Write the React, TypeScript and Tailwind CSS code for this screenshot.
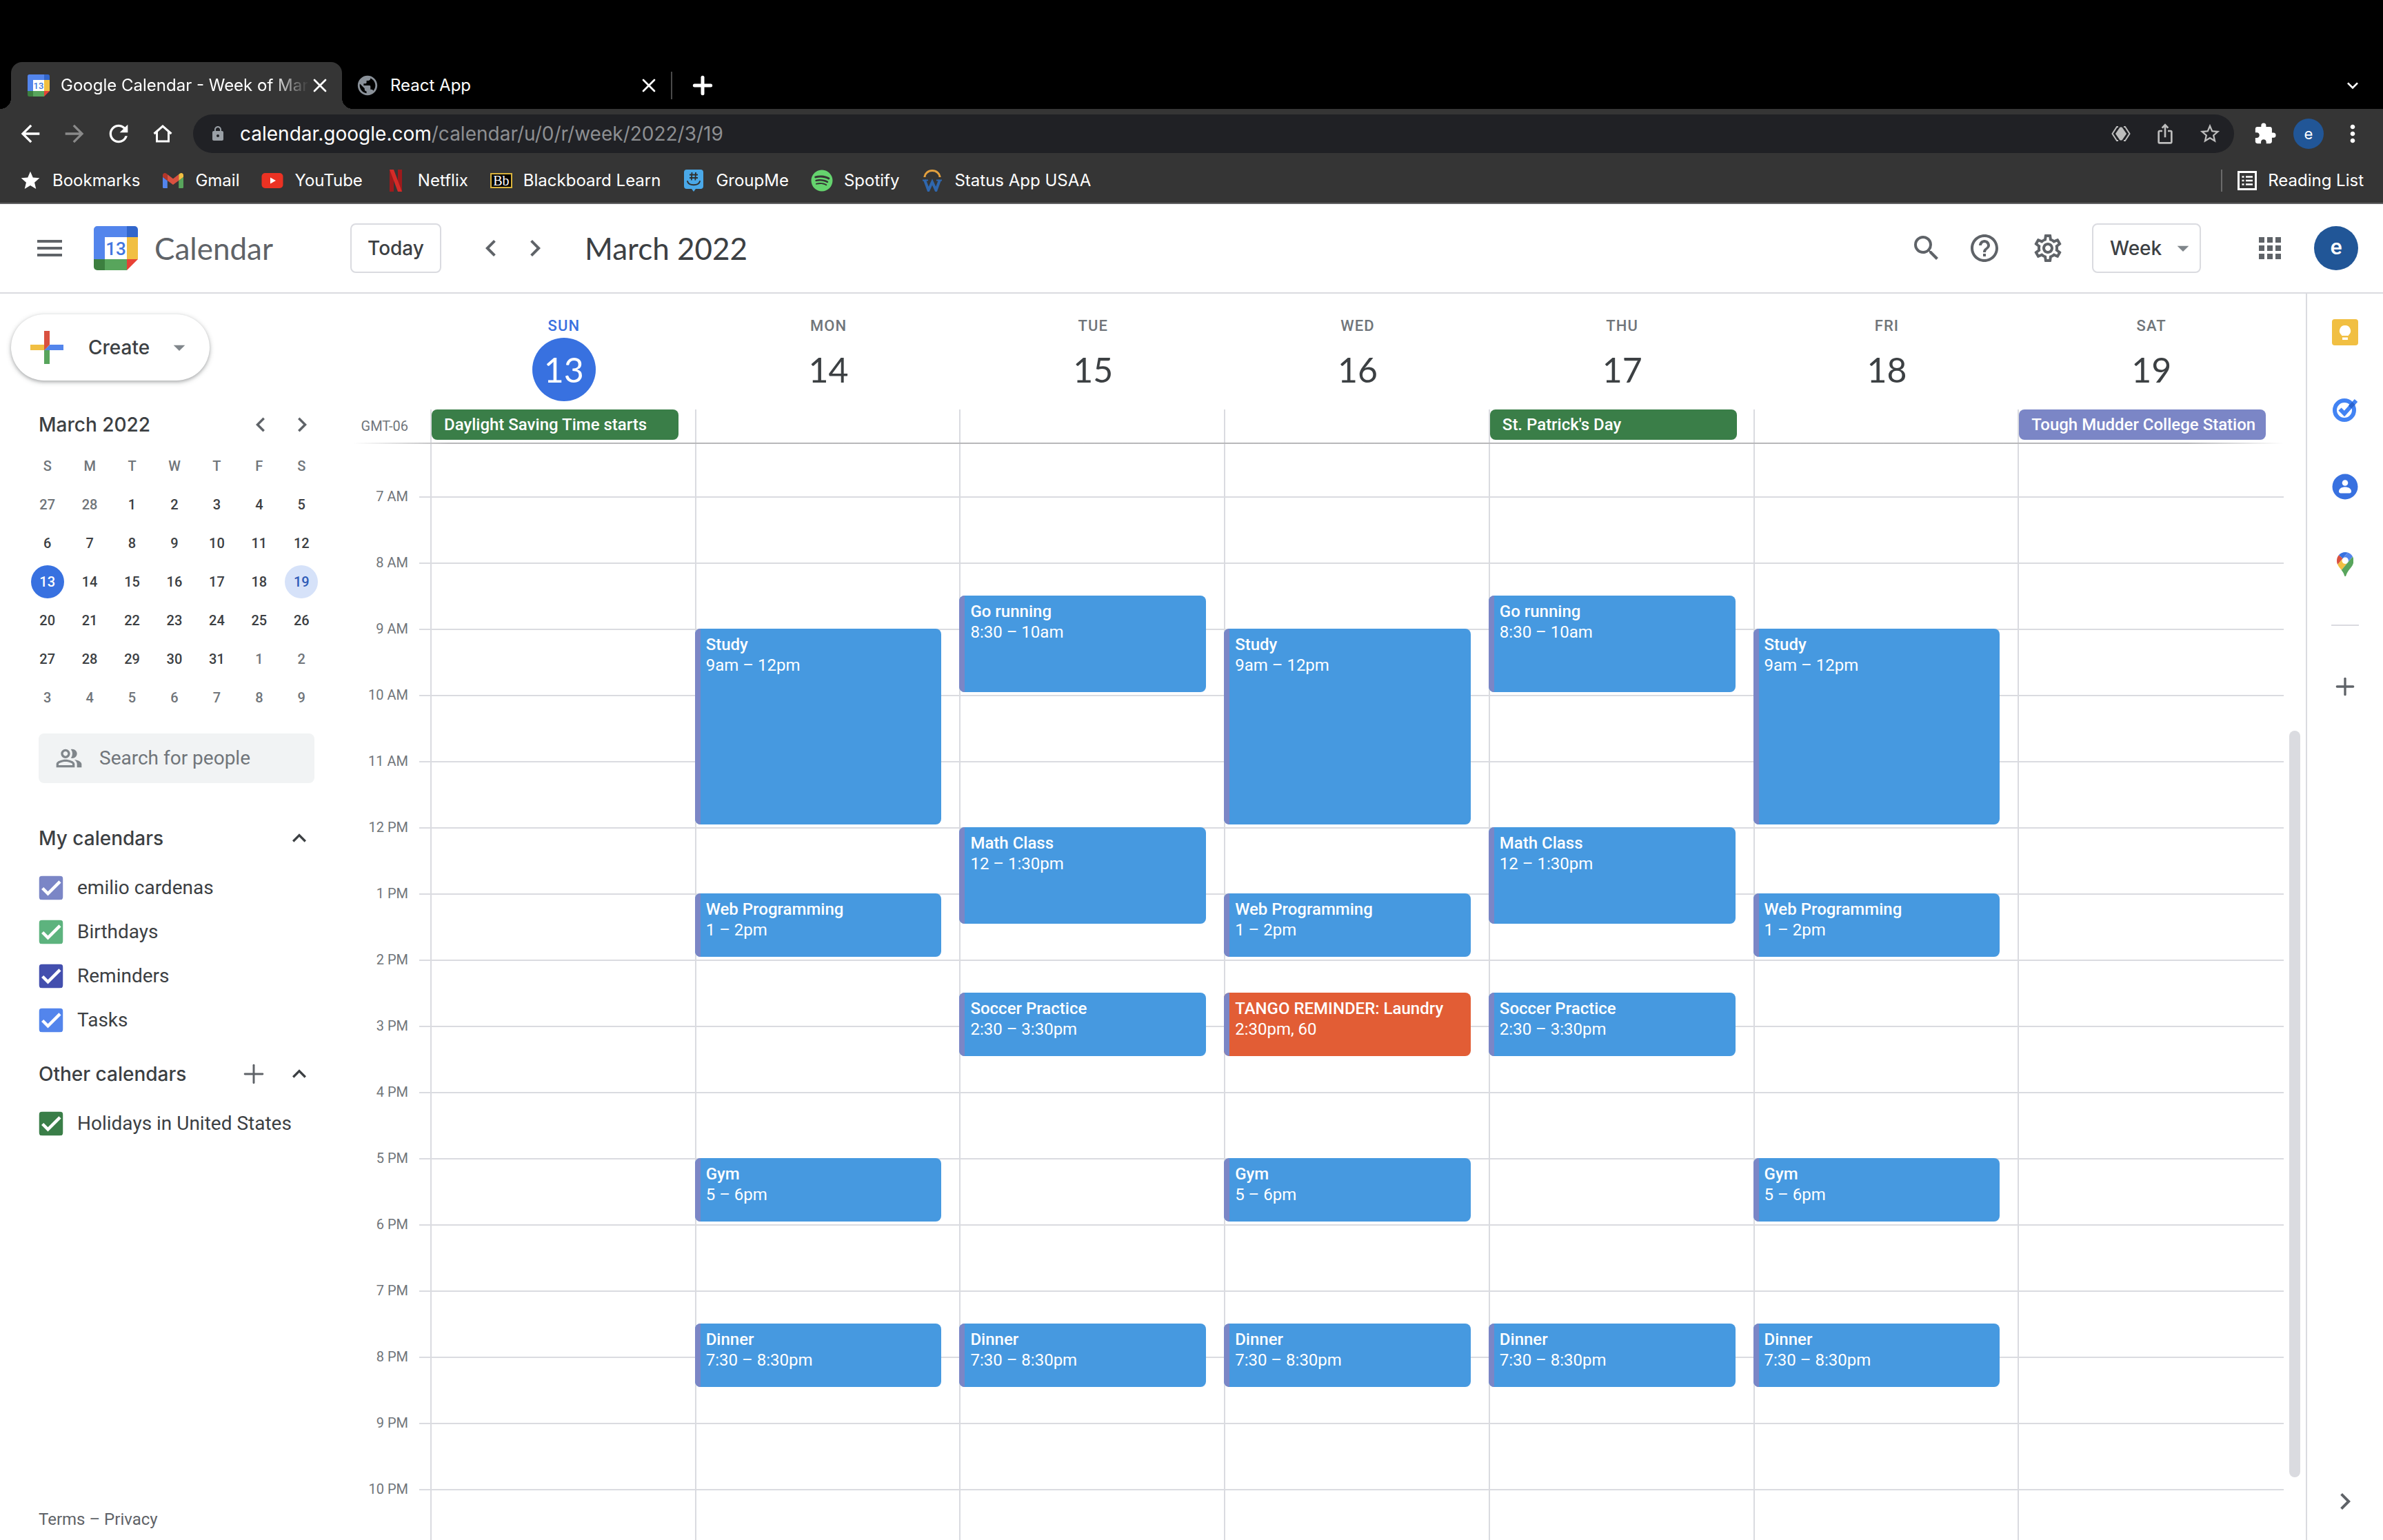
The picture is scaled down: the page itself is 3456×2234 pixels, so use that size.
import type { ReactNode } from 'react';
import { Plus, X } from 'lucide-react';
import { FaSpotify } from 'react-icons/fa';
import {
  MdApps,
  MdArrowBack,
  MdArrowDropDown,
  MdArrowForward,
  MdCheck,
  MdChevronLeft,
  MdChevronRight,
  MdExpandLess,
  MdExpandMore,
  MdExtension,
  MdHelpOutline,
  MdIosShare,
  MdLock,
  MdMenu,
  MdMoreVert,
  MdOutlinePeopleAlt,
  MdOutlineSettings,
  MdPublic,
  MdRefresh,
  MdSearch,
  MdStar,
  MdStarBorder,
} from 'react-icons/md';

type CalendarEvent = {
  title: string;
  time: string;
  start: number;
  end: number;
  reminder?: boolean;
};

type Day = {
  name: string;
  date: number;
  today?: boolean;
  allDay?: { title: string; holiday: boolean };
  events: CalendarEvent[];
};

const HOUR = 96;
const FIRST_LINE = 76;

const study = { title: 'Study', time: '9am – 12pm', start: 9, end: 12 };
const web = { title: 'Web Programming', time: '1 – 2pm', start: 13, end: 14 };
const gym = { title: 'Gym', time: '5 – 6pm', start: 17, end: 18 };
const dinner = { title: 'Dinner', time: '7:30 – 8:30pm', start: 19.5, end: 20.5 };
const running = { title: 'Go running', time: '8:30 – 10am', start: 8.5, end: 10 };
const math = { title: 'Math Class', time: '12 – 1:30pm', start: 12, end: 13.5 };
const soccer = { title: 'Soccer Practice', time: '2:30 – 3:30pm', start: 14.5, end: 15.5 };
const laundry = {
  title: 'TANGO REMINDER: Laundry',
  time: '2:30pm, 60',
  start: 14.5,
  end: 15.5,
  reminder: true,
};

const days: Day[] = [
  { name: 'Sun', date: 13, today: true, allDay: { title: 'Daylight Saving Time starts', holiday: true }, events: [] },
  { name: 'Mon', date: 14, events: [study, web, gym, dinner] },
  { name: 'Tue', date: 15, events: [running, math, soccer, dinner] },
  { name: 'Wed', date: 16, events: [study, web, laundry, gym, dinner] },
  { name: 'Thu', date: 17, allDay: { title: "St. Patrick's Day", holiday: true }, events: [running, math, soccer, dinner] },
  { name: 'Fri', date: 18, events: [study, web, gym, dinner] },
  { name: 'Sat', date: 19, allDay: { title: 'Tough Mudder College Station', holiday: false }, events: [] },
];

const hours = [
  '7 AM', '8 AM', '9 AM', '10 AM', '11 AM', '12 PM', '1 PM', '2 PM',
  '3 PM', '4 PM', '5 PM', '6 PM', '7 PM', '8 PM', '9 PM', '10 PM',
];

const weeks = [
  [27, 28, 1, 2, 3, 4, 5],
  [6, 7, 8, 9, 10, 11, 12],
  [13, 14, 15, 16, 17, 18, 19],
  [20, 21, 22, 23, 24, 25, 26],
  [27, 28, 29, 30, 31, 1, 2],
  [3, 4, 5, 6, 7, 8, 9],
];

const myCalendars = [
  { name: 'emilio cardenas', color: 'bg-[#7b86c6]' },
  { name: 'Birthdays', color: 'bg-[#5db37e]' },
  { name: 'Reminders', color: 'bg-[#434fae]' },
  { name: 'Tasks', color: 'bg-[#5385ec]' },
];

const otherCalendars = [{ name: 'Holidays in United States', color: 'bg-[#3a7e48]' }];

function CalendarLogo({ className }: { className: string }) {
  return (
    <svg viewBox="0 0 64 64" className={className} aria-hidden="true">
      <path fill="#fff" d="M15 15h34v34H15z" />
      <path fill="#5385ec" d="M5 0h43v16H16v32H0V5a5 5 0 0 1 5-5z" />
      <path fill="#3266cb" d="M48 0h11a5 5 0 0 1 5 5v11H48z" />
      <path fill="#f1bf42" d="M48 16h16v32H48z" />
      <path fill="#58a55c" d="M16 48h32v16H16z" />
      <path fill="#3c7f3f" d="M0 48h16v16H5a5 5 0 0 1-5-5z" />
      <path fill="#e84135" d="M48 48h16L48 64z" />
      <text x="32" y="42" textAnchor="middle" fill="#4377e0" className="font-['Roboto',sans-serif] text-[26px] font-medium">
        13
      </text>
    </svg>
  );
}

function GmailIcon() {
  return (
    <svg viewBox="52 42 88 66" className="w-8 px-px" aria-hidden="true">
      <path fill="#5385ec" d="M58 108h14V74L52 59v43c0 3.32 2.69 6 6 6" />
      <path fill="#58a55c" d="M120 108h14c3.32 0 6-2.69 6-6V59l-20 15" />
      <path fill="#f1bf42" d="M120 48v26l20-15v-8c0-7.42-8.47-11.65-14.4-7.2" />
      <path fill="#d95140" d="M72 74V48l24 18 24-18v26L96 92" />
      <path fill="#b3362a" d="M52 51v8l20 15V48l-5.6-4.2c-5.94-4.45-14.4-.22-14.4 7.2" />
    </svg>
  );
}

function YouTubeIcon() {
  return (
    <svg viewBox="0 0 32 32" className="size-8" aria-hidden="true">
      <rect x="0.5" y="5" width="31" height="22" rx="5" fill="#eb3223" />
      <path fill="#fff" d="M13 11.5v9l8-4.5z" />
    </svg>
  );
}

function NetflixIcon() {
  return (
    <svg viewBox="0 0 32 32" className="size-8" aria-hidden="true">
      <path fill="#9c1a1c" d="M7 0h6v32H7zM19 0h6v32h-6z" />
      <path fill="#d62b28" d="M7 0h6l12 32h-6z" />
    </svg>
  );
}

function BlackboardIcon() {
  return (
    <span className="flex size-8 items-center justify-center" aria-hidden="true">
      <span className="flex h-[22px] w-8 items-center justify-center border-2 border-[#d9b23c] bg-black font-['Liberation_Serif',serif] text-[20px] leading-none text-white">
        Bb
      </span>
    </span>
  );
}

function GroupMeIcon() {
  return (
    <svg viewBox="0 0 32 32" className="size-8" aria-hidden="true">
      <path fill="#4aa8e8" d="M6 0h20a4 4 0 0 1 4 4v20a4 4 0 0 1-4 4h-7l-3 4-3-4H6a4 4 0 0 1-4-4V4a4 4 0 0 1 4-4z" />
      <path fill="none" stroke="#303030" strokeWidth="1.8" d="M13.5 4 12.800 15.500M19 4l-.7 11.500M10 7.500h12M10 12h12" />
      <path fill="none" stroke="#303030" strokeWidth="2" strokeLinecap="round" d="M7 17c2 7 16 7 18 0" />
    </svg>
  );
}

function StatusIcon() {
  return (
    <svg viewBox="0 0 32 32" className="size-8" aria-hidden="true">
      <path fill="none" stroke="#e3a03e" strokeWidth="3" d="M5 11a11 9.500 0 0 1 22 0" />
      <path fill="none" stroke="#2f67ae" strokeWidth="4" d="M5 15l5.500 15L16 18l5.500 12L27 15" />
      <path fill="none" stroke="#2f67ae" strokeWidth="2" d="M2 15.500h8M22 15.500h8" />
    </svg>
  );
}

function HomeIcon() {
  return (
    <svg viewBox="0 0 28 28" className="size-7" fill="none" stroke="currentColor" strokeWidth="3" aria-hidden="true">
      <path d="M1.500 14 14 3l12.500 11M5.500 11.500V25h17V11.500" />
    </svg>
  );
}

function DiamondIcon() {
  return (
    <svg viewBox="0 0 32 32" className="size-8" aria-hidden="true">
      <path fill="currentColor" d="M14.500 6.500h3L24 16l-6.500 9.500h-3L8 16z" />
      <path fill="none" stroke="currentColor" strokeWidth="2" d="M12 6 10 6 3.500 16 10 26h2M20 6h2l6.500 10L22 26h-2" />
    </svg>
  );
}

function ReadingListIcon() {
  return (
    <svg viewBox="0 0 28 28" className="size-7" fill="none" stroke="currentColor" aria-hidden="true">
      <rect x="1.500" y="1.500" width="25" height="25" strokeWidth="3" />
      <path strokeWidth="2.500" d="M6.500 8.500h3M6.500 14h3M6.500 19.500h3M12 8.500h10M12 14h10M12 19.500h10" />
    </svg>
  );
}

function KeepIcon() {
  return (
    <svg viewBox="0 0 38 38" className="size-[38px]" aria-hidden="true">
      <rect width="38" height="38" rx="4" fill="#f1bf42" />
      <path fill="#fff" d="M19 9a8 8 0 0 0-5 14.300V24h10v-.7A8 8 0 0 0 19 9zM15 26.500h8V30h-8z" />
    </svg>
  );
}

function TasksIcon() {
  return (
    <svg viewBox="0 0 36 36" className="size-9" fill="none" aria-hidden="true">
      <circle cx="17" cy="19" r="14" stroke="#4283f3" strokeWidth="6" />
      <path stroke="#4283f3" strokeWidth="6" d="M10.500 17.500 17 24 34 5" />
      <path stroke="#2a63cf" strokeWidth="6" d="M25 14.500 30.500 9" />
    </svg>
  );
}

function ContactsIcon() {
  return (
    <svg viewBox="0 0 38 38" className="size-[38px]" aria-hidden="true">
      <circle cx="19" cy="19" r="18.500" fill="#3871e0" />
      <circle cx="19" cy="13.500" r="4.300" fill="#fff" />
      <path fill="#fff" d="M10 26c0-4.500 4.500-6.500 9-6.500s9 2 9 6.500c0 1.500-1 2.500-2.500 2.500h-13C11 28.500 10 27.500 10 26z" />
    </svg>
  );
}

function MapsIcon() {
  return (
    <svg viewBox="0 0 92.3 132.3" className="h-[35px]" aria-hidden="true">
      <path fill="#3871e0" d="M60.2 2.2C55.8.8 51 0 46.1 0 32 0 19.3 6.4 10.8 16.5l21.8 18.3L60.2 2.2z" />
      <path fill="#d95140" d="M10.8 16.500C4.100 24.500 0 34.900 0 46.100c0 8.700 1.700 15.700 4.600 22l28-33.300-21.800-18.300z" />
      <path fill="#5385ec" d="M46.2 28.500c9.800 0 17.700 7.900 17.700 17.700 0 4.300-1.600 8.300-4.200 11.400 0 0 13.900-16.600 27.500-32.700-5.600-10.800-15.300-19-27-22.700L32.600 34.800c3.300-3.800 8.100-6.300 13.600-6.300" />
      <path fill="#f1bf42" d="M46.2 63.800c-9.800 0-17.700-7.900-17.700-17.700 0-4.300 1.500-8.300 4.100-11.300l-28 33.300c4.800 10.600 12.800 19.200 21 29.900l34.100-40.500c-3.300 3.900-8.100 6.300-13.500 6.300" />
      <path fill="#58a55c" d="M59.1 109.200c15.400-24.100 33.300-35 33.300-63 0-7.700-1.900-14.900-5.200-21.300L25.600 98c2.600 3.400 5.300 7.300 7.900 11.300 9.400 14.500 6.800 23.100 12.800 23.100s3.400-8.700 12.800-23.200" />
    </svg>
  );
}

function TabStrip() {
  return (
    <div className="flex bg-black pt-[90px] pr-7 pl-4">
      <div className="relative flex h-[68px] w-[480px] items-center gap-4 rounded-t-2xl bg-[#353535] pr-4 pl-6">
        <span className="absolute bottom-0 -left-4 size-4 bg-[radial-gradient(circle_at_0_0,transparent_16px,#353535_16px)]" />
        <span className="absolute -right-4 bottom-0 size-4 bg-[radial-gradient(circle_at_100%_0,transparent_16px,#353535_16px)]" />
        <CalendarLogo className="size-8 shrink-0" />
        <span className="flex-1 whitespace-nowrap [mask-image:linear-gradient(to_right,black_85%,transparent)]">
          Google Calendar - Week of Mar
        </span>
        <button aria-label="Close tab" className="-ml-4">
          <X size={32} strokeWidth={2} />
        </button>
      </div>
      <div className="flex h-[68px] w-[477px] items-center gap-4 pr-4 pl-5">
        <MdPublic className="size-[34px] text-[#8a9199]" />
        <span className="flex-1">React App</span>
        <button aria-label="Close tab">
          <X size={32} strokeWidth={2} />
        </button>
      </div>
      <div className="my-[14px] w-0.5 bg-[#4a4a4a]" />
      <button aria-label="New tab" className="ml-6">
        <Plus size={40} strokeWidth={3} />
      </button>
      <button aria-label="Search tabs" className="ml-auto">
        <MdExpandMore size={32} />
      </button>
    </div>
  );
}

function AddressBar() {
  return (
    <div className="flex items-center px-6 py-2">
      <div className="flex items-center gap-6 pr-[30px]">
        <button aria-label="Back">
          <MdArrowBack size={40} />
        </button>
        <button aria-label="Forward" className="text-[#8a8a8a]">
          <MdArrowForward size={40} />
        </button>
        <button aria-label="Reload">
          <MdRefresh size={40} />
        </button>
        <button aria-label="Home" className="pl-1.5">
          <HomeIcon />
        </button>
      </div>
      <div className="flex h-14 flex-1 items-center rounded-full bg-[#202125] pr-[18px] pl-6 text-[28px] text-[#bdbdbd]">
        <MdLock size={24} className="text-[#9aa0a6]" />
        <a href="#url" className="flex-1 pl-5 text-[#8d8f92]">
          <span className="text-white">calendar.google.com</span>/calendar/u/0/r/week/2022/3/19
        </a>
        <div className="flex items-center gap-8">
          <DiamondIcon />
          <MdIosShare size={32} />
          <MdStarBorder size={34} />
        </div>
      </div>
      <button aria-label="Extensions" className="ml-7">
        <MdExtension size={34} />
      </button>
      <button className="ml-6 size-11 rounded-full bg-[#215697] text-[22px]">e</button>
      <button aria-label="Menu" className="ml-[22px]">
        <MdMoreVert size={40} />
      </button>
    </div>
  );
}

function Bookmark({ icon, label }: { icon: ReactNode; label: string }) {
  return (
    <a href="#bookmark" className="flex items-center gap-4 whitespace-nowrap">
      {icon}
      {label}
    </a>
  );
}

function BookmarksBar() {
  return (
    <div className="flex h-16 items-center gap-8 px-7">
      <Bookmark icon={<MdStar size={32} />} label="Bookmarks" />
      <Bookmark icon={<GmailIcon />} label="Gmail" />
      <Bookmark icon={<YouTubeIcon />} label="YouTube" />
      <Bookmark icon={<NetflixIcon />} label="Netflix" />
      <Bookmark icon={<BlackboardIcon />} label="Blackboard Learn" />
      <Bookmark icon={<GroupMeIcon />} label="GroupMe" />
      <Bookmark icon={<FaSpotify className="size-8 text-[#65d36e]" />} label="Spotify" />
      <Bookmark icon={<StatusIcon />} label="Status App USAA" />
      <div className="ml-auto flex items-center gap-[22px]">
        <div className="h-8 w-0.5 bg-[#6b6b6b]" />
        <Bookmark icon={<ReadingListIcon />} label="Reading List" />
      </div>
    </div>
  );
}

function AppHeader() {
  return (
    <header className="flex h-[130px] shrink-0 items-center border-b-2 border-[#dadbe0] pr-9 pl-12 text-[#5f6368]">
      <button aria-label="Main menu">
        <MdMenu size={48} />
      </button>
      <a href="#home" className="ml-10 flex w-[372px] items-center gap-6 font-['Lato',sans-serif] text-[44px]">
        <CalendarLogo className="size-16" />
        Calendar
      </a>
      <button className="h-[72px] w-[132px] rounded-lg border-2 border-[#dadbe0] font-['Inter',sans-serif] text-[28px] font-medium text-[#3c4043]">
        Today
      </button>
      <button aria-label="Previous week" className="ml-12">
        <MdChevronLeft size={48} />
      </button>
      <button aria-label="Next week" className="ml-4">
        <MdChevronRight size={48} />
      </button>
      <h1 className="ml-12 font-['Lato',sans-serif] text-[44px] text-[#3c4043]">March 2022</h1>
      <button aria-label="Search" className="ml-auto">
        <MdSearch size={48} />
      </button>
      <button aria-label="Help" className="ml-9">
        <MdHelpOutline size={48} />
      </button>
      <button aria-label="Settings" className="ml-11">
        <MdOutlineSettings size={48} />
      </button>
      <div className="relative ml-10">
        <select
          aria-label="View"
          className="h-[72px] w-[158px] appearance-none rounded-lg border-2 border-[#dadbe0] pl-6 font-['Inter',sans-serif] text-[28px] font-medium text-[#3c4043]"
        >
          <option>Week</option>
        </select>
        <MdArrowDropDown size={40} className="pointer-events-none absolute top-4 right-1.5 text-[#80868b]" />
      </div>
      <button aria-label="Apps" className="ml-[76px]">
        <MdApps size={48} />
      </button>
      <button className="ml-10 size-16 rounded-full bg-[#215697] pb-1 text-[32px] font-medium text-white">e</button>
    </header>
  );
}

function dayClass(week: number, date: number) {
  if (week === 2 && date === 13) return 'bg-[#3871e0] text-white';
  if (week === 2 && date === 19) return 'bg-[#d6e2f9] text-[#2f5bb7]';
  const outside = (week === 0 && date > 20) || (week > 3 && date < 10);
  return outside ? 'text-[#70757a]' : 'text-[#3c4043]';
}

function MiniCalendar() {
  return (
    <section className="mt-9 pr-11 pl-[38px]">
      <div className="flex h-14 items-center pl-[18px]">
        <h2 className="flex-1 font-['Inter',sans-serif] text-[28px] font-medium text-[#3c4043]">March 2022</h2>
        <button aria-label="Previous month" className="flex w-[60px] justify-center">
          <MdChevronLeft size={42} />
        </button>
        <button aria-label="Next month" className="flex w-[60px] justify-center">
          <MdChevronRight size={42} />
        </button>
      </div>
      <table className="mt-1 w-full table-fixed text-center text-[20px] font-medium">
        <thead>
          <tr className="h-14 text-[#70757a]">
            {['S', 'M', 'T', 'W', 'T', 'F', 'S'].map((d, i) => (
              <th key={i} className="font-medium">
                {d}
              </th>
            ))}
          </tr>
        </thead>
        <tbody>
          {weeks.map((week, w) => (
            <tr key={w} className="h-14">
              {week.map((date) => (
                <td key={date} className="p-0">
                  <span className={`mx-auto flex size-12 items-center justify-center rounded-full ${dayClass(w, date)}`}>
                    {date}
                  </span>
                </td>
              ))}
            </tr>
          ))}
        </tbody>
      </table>
    </section>
  );
}

function CalendarList({ items }: { items: { name: string; color: string }[] }) {
  return (
    <ul className="mt-1">
      {items.map((item) => (
        <li key={item.name}>
          <label className="flex h-16 items-center gap-5 text-[28px] text-[#3c4043]">
            <span className="relative size-9">
              <input type="checkbox" defaultChecked className={`block size-9 appearance-none rounded-md ${item.color}`} />
              <MdCheck size={36} strokeWidth={1} className="pointer-events-none absolute inset-0 text-white" />
            </span>
            {item.name}
          </label>
        </li>
      ))}
    </ul>
  );
}

function Sidebar() {
  return (
    <aside className="flex w-[512px] shrink-0 flex-col pt-[30px] pb-[14px] text-[#5f6368]">
      <button className="ml-4 flex h-24 w-72 items-center rounded-full pl-4 font-['Inter',sans-serif] text-[28px] font-medium text-[#3c4043] shadow-[0_2px_4px_rgba(60,64,67,0.3),0_2px_6px_2px_rgba(60,64,67,0.15)]">
        <svg viewBox="0 0 36 36" className="size-[72px]" aria-hidden="true">
          <path fill="#58a55c" d="M16 16v14h4V20z" />
          <path fill="#5385ec" d="M30 16H20l-4 4h14z" />
          <path fill="#f1bf42" d="M6 16v4h10l4-4z" />
          <path fill="#d95140" d="M20 16V6h-4v14z" />
        </svg>
        <span className="w-[116px] pl-6 text-left">Create</span>
        <MdArrowDropDown size={40} className="ml-5 text-[#80868b]" />
      </button>
      <MiniCalendar />
      <label className="mt-6 mr-14 ml-14 flex h-[72px] items-center gap-6 rounded-lg bg-[#f1f3f4] pl-6">
        <MdOutlinePeopleAlt size={40} className="shrink-0 text-[#80868b]" />
        <input
          type="text"
          placeholder="Search for people"
          aria-label="Search for people"
          className="min-w-0 flex-1 text-[28px] placeholder:text-[#70757a]"
        />
      </label>
      <section className="mt-11 pr-[58px] pl-14">
        <div className="flex h-[72px] items-center">
          <h2 className="flex-1 font-['Inter',sans-serif] text-[28px] font-medium text-[#3c4043]">My calendars</h2>
          <button aria-label="Collapse my calendars">
            <MdExpandLess size={40} className="text-[#3c4043]" />
          </button>
        </div>
        <CalendarList items={myCalendars} />
      </section>
      <section className="mt-[10px] pr-[58px] pl-14">
        <div className="flex h-[72px] items-center">
          <h2 className="flex-1 font-['Inter',sans-serif] text-[28px] font-medium text-[#3c4043]">Other calendars</h2>
          <button aria-label="Add calendar" className="mr-6">
            <Plus size={44} strokeWidth={1.6} />
          </button>
          <button aria-label="Collapse other calendars">
            <MdExpandLess size={40} className="text-[#3c4043]" />
          </button>
        </div>
        <CalendarList items={otherCalendars} />
      </section>
      <footer className="mt-auto pl-14 text-[24px] leading-8">
        <a href="#terms">Terms</a> – <a href="#privacy">Privacy</a>
      </footer>
    </aside>
  );
}

function WeekHeader() {
  return (
    <div className="flex pr-[34px]">
      <div className="flex w-28 items-end justify-end pr-8 text-[20px] text-[#70757a]">
        <span className="leading-[48px]">GMT-06</span>
      </div>
      <div className="grid flex-1 grid-cols-7">
        {days.map((day) => (
          <div key={day.name}>
            <div className="flex flex-col items-center pt-9 pb-3 pl-1">
              <span
                className={`text-[22px] leading-[22px] font-medium tracking-wider uppercase ${day.today ? 'text-[#3871e0]' : 'text-[#70757a]'}`}
              >
                {day.name}
              </span>
              <span
                className={`mt-1.5 flex size-[92px] items-center justify-center rounded-full font-['Lato',sans-serif] text-[50px] ${day.today ? 'bg-[#3871e0] text-white' : 'text-[#3c4043]'}`}
              >
                {day.date}
              </span>
            </div>
            <div className="h-12 border-l-2 border-[#dadbe0] pr-6">
              {day.allDay && (
                <button
                  className={`block h-11 w-full rounded-lg pl-[18px] text-left text-[24px] font-medium whitespace-nowrap text-white ${day.allDay.holiday ? 'bg-[#3a7e48]' : 'bg-[#7b86c6]'}`}
                >
                  {day.allDay.title}
                </button>
              )}
            </div>
          </div>
        ))}
      </div>
    </div>
  );
}

function EventCard({ event }: { event: CalendarEvent }) {
  return (
    <button
      className={`absolute right-[26px] -left-0.5 flex flex-col items-start overflow-hidden rounded-lg pt-2 pl-4 text-left text-[24px] leading-[30px] whitespace-nowrap text-white ${event.reminder ? 'bg-[#e25d35]' : 'bg-[#4699e0]'}`}
      style={{
        top: FIRST_LINE + (event.start - 7) * HOUR,
        height: (event.end - event.start) * HOUR - 4,
      }}
    >
      <span className="absolute inset-y-0 left-0 w-2 bg-[#7b86c6]" />
      <span className="font-medium">{event.title}</span>
      <span>{event.time}</span>
    </button>
  );
}

function WeekGrid() {
  return (
    <main className="flex min-w-0 flex-1 flex-col">
      <WeekHeader />
      <div className="mr-8 h-0.5 shrink-0 bg-linear-to-r from-transparent via-[#b8b8ba] via-5% to-[#b8b8ba] mask-r-from-95%" />
      <div className="flex min-h-0 flex-1 overflow-hidden">
        <div className="w-20 shrink-0 pt-7 text-[20px] text-[#70757a]">
          {hours.map((hour) => (
            <div key={hour} className="flex h-24 items-center justify-end">
              {hour}
            </div>
          ))}
        </div>
        <div className="ml-4 grid flex-1">
          <div className="col-start-1 row-start-1 pt-[76px]">
            {hours.map((hour) => (
              <div key={hour} className="h-24 border-t-2 border-[#dadbe0]" />
            ))}
          </div>
          <div className="col-start-1 row-start-1 mr-0.5 ml-4 grid grid-cols-7">
            {days.map((day) => (
              <div key={day.name} className="relative border-l-2 border-[#dadbe0]">
                {day.events.map((event) => (
                  <EventCard key={event.title} event={event} />
                ))}
              </div>
            ))}
          </div>
        </div>
        <div className="flex w-8 px-2 pt-[416px] pb-[91px]">
          <div className="w-4 rounded-full bg-[#dadbe0]" />
        </div>
      </div>
    </main>
  );
}

function SidePanel() {
  return (
    <aside className="flex w-28 shrink-0 flex-col items-center border-l-2 border-[#dadbe0] pb-8 text-[#5f6368]">
      <button aria-label="Keep" className="flex h-28 items-center justify-center">
        <KeepIcon />
      </button>
      <button aria-label="Tasks" className="flex h-28 items-center justify-center">
        <TasksIcon />
      </button>
      <button aria-label="Contacts" className="flex h-28 items-center justify-center">
        <ContactsIcon />
      </button>
      <button aria-label="Maps" className="flex h-28 items-center justify-center">
        <MapsIcon />
      </button>
      <div className="mt-8 h-0.5 w-10 bg-[#dadbe0]" />
      <button aria-label="Get add-ons" className="mt-[68px]">
        <Plus size={40} strokeWidth={2} />
      </button>
      <button aria-label="Hide side panel" className="mt-auto">
        <MdChevronRight size={48} />
      </button>
    </aside>
  );
}

export default function App() {
  return (
    <div className="flex h-screen flex-col overflow-hidden bg-white font-['Roboto',sans-serif]">
      <div className="shrink-0 border-b-2 border-[#606062] bg-[#353535] font-['Inter',sans-serif] text-[24px] text-white">
        <TabStrip />
        <AddressBar />
        <BookmarksBar />
      </div>
      <AppHeader />
      <div className="flex min-h-0 flex-1">
        <Sidebar />
        <WeekGrid />
        <SidePanel />
      </div>
    </div>
  );
}
